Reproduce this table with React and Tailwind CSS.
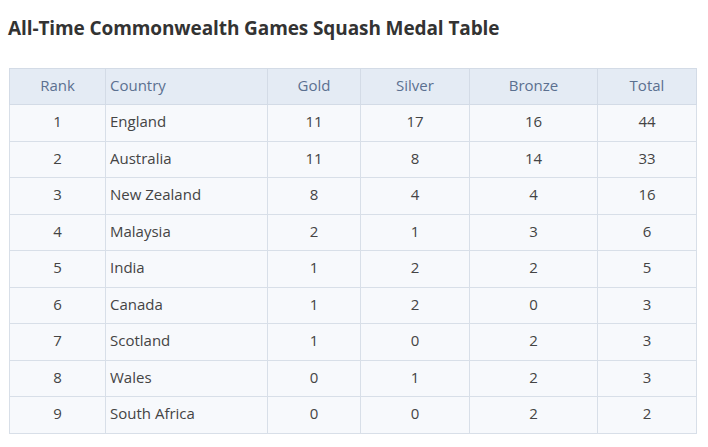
import React from "react";

const rows = [
  [1, "England", 11, 17, 16, 44],
  [2, "Australia", 11, 8, 14, 33],
  [3, "New Zealand", 8, 4, 4, 16],
  [4, "Malaysia", 2, 1, 3, 6],
  [5, "India", 1, 2, 2, 5],
  [6, "Canada", 1, 2, 0, 3],
  [7, "Scotland", 1, 0, 2, 3],
  [8, "Wales", 0, 1, 2, 3],
  [9, "South Africa", 0, 0, 2, 2],
];

export default function App() {
  return (
    <div className="w-[708px] h-[447px] bg-white overflow-hidden" style={{ fontFamily: '"Open Sans", "Noto Sans", sans-serif' }}>
      <h1 className="pl-[8px] pt-[14px] h-[68px] text-[19px] font-bold text-[#333333] leading-[28px] tracking-[-0.1px]">
        All-Time Commonwealth Games Squash Medal Table
      </h1>
      <table className="ml-[9px] w-[687px] border-collapse text-[15px] table-fixed">
        <colgroup>
          <col className="w-[96px]" />
          <col className="w-[162px]" />
          <col className="w-[93px]" />
          <col className="w-[109px]" />
          <col className="w-[128px]" />
          <col className="w-[99px]" />
        </colgroup>
        <thead>
          <tr className="h-[36px] bg-[#e4ebf4] text-[#5b7090]">
            <th className="font-normal border border-[#d3dbe6] text-center pb-[3px]">Rank</th>
            <th className="font-normal border border-[#d3dbe6] text-left pl-[4px] pb-[3px]">Country</th>
            <th className="font-normal border border-[#d3dbe6] text-center pb-[3px]">Gold</th>
            <th className="font-normal border border-[#d3dbe6] text-center pb-[3px]">Silver</th>
            <th className="font-normal border border-[#d3dbe6] text-center pb-[3px]">Bronze</th>
            <th className="font-normal border border-[#d3dbe6] text-center pb-[3px]">Total</th>
          </tr>
        </thead>
        <tbody>
          {rows.map((r) => (
            <tr key={r[0]} className="h-[36.5px] bg-[#f7f9fc] text-[#444444]">
              <td className="border border-[#d8dfe8] text-center pb-[3px]">{r[0]}</td>
              <td className="border border-[#d8dfe8] text-left pl-[4px] pb-[3px]">{r[1]}</td>
              <td className="border border-[#d8dfe8] text-center pb-[3px]">{r[2]}</td>
              <td className="border border-[#d8dfe8] text-center pb-[3px]">{r[3]}</td>
              <td className="border border-[#d8dfe8] text-center pb-[3px]">{r[4]}</td>
              <td className="border border-[#d8dfe8] text-center pb-[3px]">{r[5]}</td>
            </tr>
          ))}
        </tbody>
      </table>
    </div>
  );
}
